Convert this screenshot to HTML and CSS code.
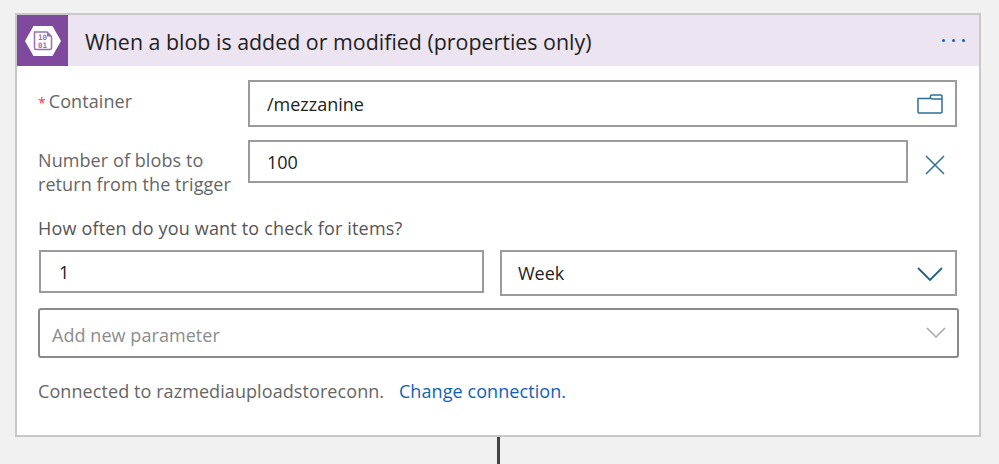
FILE: index.html
```html
<!DOCTYPE html>
<html lang="en">
<head>
<meta charset="utf-8">
<title>When a blob is added or modified</title>
<link rel="stylesheet" href="styles.css">
</head>
<body>
<section class="card">
  <header class="head">
    <div class="logo">
      <svg width="36" height="30" viewBox="0 0 36 30">
        <path d="M8.500 0H27.500L36 15L27.500 30H8.500L0 15Z" fill="#fff"/>
        <path d="M9.500 6H22L26.500 10.500V22Q26.500 23.500 25 23.500H11Q9.500 23.500 9.500 22Z" fill="none" stroke="#9a70b0" stroke-width="1.500"/>
        <path d="M22 6L26.500 10.500H22Z" fill="#9a70b0"/>
        <text x="17.500" y="14" class="bits">10</text>
        <text x="17.500" y="21.500" class="bits">01</text>
      </svg>
    </div>
    <h1 class="title">When a blob is added or modified (properties only)</h1>
    <div class="more"><i></i><i></i><i></i></div>
  </header>
  <div class="body">
    <div class="row row-container">
      <label class="label label-req"><span class="req">*</span>Container</label>
      <div class="field field-container">
        <span>/mezzanine</span>
        <svg class="folder" width="26" height="20" viewBox="0 0 26 20">
          <path d="M1 4.500H12.500L13.500 3.500Q13 1 15 1H24Q25 1 25 2V18Q25 19 24 19H2Q1 19 1 18Z M13.500 3.500Q14 5 15 5H25" fill="none" stroke="#2f6f94" stroke-width="1.500"/>
        </svg>
      </div>
    </div>
    <div class="row row-number">
      <label class="label label-two">Number of blobs to<br>return from the trigger</label>
      <div class="field field-number"><span>100</span></div>
      <svg class="close" width="20" height="20" viewBox="0 0 20 20">
        <path d="M1 1L19 19M19 1L1 19" fill="none" stroke="#2f6f94" stroke-width="1.500"/>
      </svg>
    </div>
    <div class="often">How often do you want to check for items?</div>
    <div class="row-freq">
      <div class="field field-one"><span>1</span></div>
      <div class="field field-week">
        <span>Week</span>
        <svg width="26" height="16" viewBox="0 0 26 16">
          <path d="M1 3L13 15L25 3" fill="none" stroke="#1f5f86" stroke-width="1.800"/>
        </svg>
      </div>
    </div>
    <div class="field field-add">
      <span>Add new parameter</span>
      <svg width="20" height="12" viewBox="0 0 20 12">
        <path d="M1 1L10 10L19 1" fill="none" stroke="#a6a6a6" stroke-width="1.500"/>
      </svg>
    </div>
    <p class="conn">Connected to razmediauploadstoreconn. <a href="#">Change connection.</a></p>
  </div>
</section>
<div class="connector"></div>
</body>
</html>
```
FILE: styles.css
```css
* { box-sizing: border-box; }
html, body { margin: 0; height: 100%; }
body {
  background: #f1f1f1;
  padding: 13px 18px 0 15px;
  overflow: hidden;
  font-family: "Open Sans", "Noto Sans", sans-serif;
  color: #222;
}
.card {
  height: 424px;
  background: #fff;
  border: 2px solid #c8c8c8;
}
.head {
  display: flex;
  align-items: center;
  height: 51px;
  background: #ece4f0;
}
.logo {
  width: 51px;
  height: 51px;
  background: #7f4a9d;
  display: flex;
  align-items: center;
  justify-content: center;
  flex: none;
}
.bits {
  font-family: "DejaVu Sans Mono", monospace;
  font-size: 7.500px;
  font-weight: 700;
  fill: #9a70b0;
  text-anchor: middle;
}
.title {
  margin: 2px 0 0 17px;
  font-size: 21.400px;
  font-weight: 400;
  color: #1f1f1f;
  flex: 1;
}
.more {
  display: flex;
  gap: 7px;
  margin-right: 14px;
}
.more i {
  width: 3px;
  height: 3px;
  border-radius: 50%;
  background: #0f62b8;
}
.body { padding: 14px 22px 0 21px; }
.row {
  display: flex;
}
.row-container { height: 47px; }
.row-number { margin-top: 13px; height: 43px; align-items: flex-start; }
.label {
  width: 210px;
  flex: none;
  font-size: 18px;
  color: #666;
  letter-spacing: 0.080px;
}
.label-req { padding-top: 9px; line-height: 24px; }
.req { color: #e8384f; font-size: 14px; margin-right: 3px; }
.label-two { line-height: 24px; padding-top: 8px; }
.field {
  display: flex;
  align-items: center;
  justify-content: space-between;
  background: #fff;
  border: 2px solid #9b9b9b;
  font-size: 18px;
  color: #222;
}
.field-container { width: 709px; padding: 0 12px 0 17px; height: 47px; }
.field-number { width: 660px; padding: 0 17px; height: 43px; }
.close { margin: 15px 0 0 17px; }
.often {
  margin-top: 33px;
  font-size: 18px;
  line-height: 24px;
  color: #555;
  letter-spacing: 0.170px;
}
.row-freq {
  display: flex;
  align-items: flex-start;
  margin: 10px 0 0 1px;
  gap: 16px;
}
.field-one { width: 445px; height: 43px; padding: 0 18px; }
.field-week { width: 457px; height: 46px; padding: 0 12px 0 16px; }
.field-add {
  margin-top: 12px;
  width: 921px;
  height: 50px;
  border-radius: 3px;
  border-color: #8a8a8a;
  padding: 0 11px 0 12px;
  color: #8c8c8c;
}
.field-add span { padding-top: 3px; letter-spacing: 0.060px; }
.conn {
  margin: 21px 0 0;
  font-size: 18px;
  line-height: 24px;
  color: #666;
  letter-spacing: 0.080px;
}
.conn a {
  margin-left: 10px;
  color: #0f62b8;
  text-decoration: none;
}
.connector {
  width: 3px;
  height: 27px;
  margin-left: 482px;
  background: #444;
}
```
